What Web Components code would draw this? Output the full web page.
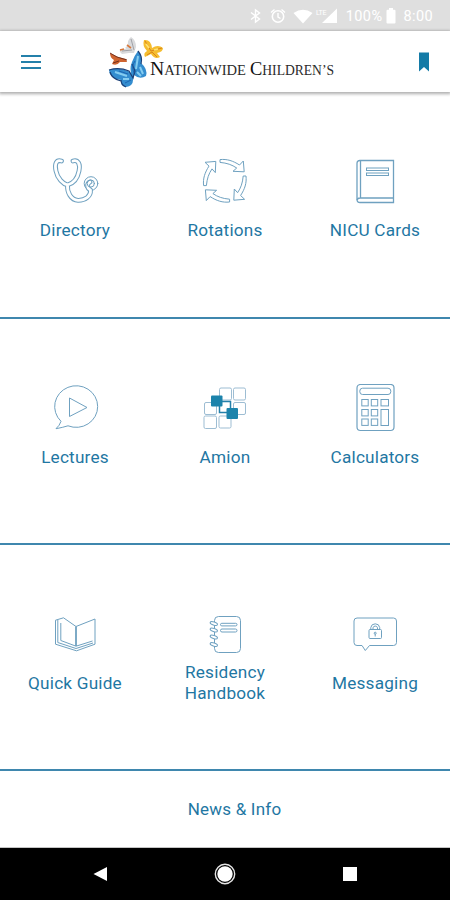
<!DOCTYPE html>
<html lang="en">
<head>
<meta charset="utf-8">
<meta name="viewport" content="width=device-width, initial-scale=1">
<title>Nationwide Children's</title>
<style>
  body {
    margin: 0;
    background: #fff;
    font-family: Roboto, "Liberation Sans", sans-serif;
    color: #1f77a3;
  }
</style>
</head>
<body>
<home-screen></home-screen>

<script>
  // line icons, all on a 48 x 48 grid
  const ARROW = '<path d="M19 2.600C26 1.800 32 3.800 38.500 8L42.300 4L43.200 14.800L32 14.300L35.700 11C31 7.800 26 6 19 5.400Z"/>';
  const TUBE = 'M10.500 4C5 2.500 3.500 7 5 14C6.500 21.500 12 27 16.500 28C22 26.500 26.500 21.500 28 14C29.500 7 27 2.500 22 4M16.500 28C16 35.500 20 43 27 43.300C34 43.500 40 39.500 39.500 33C36 31.500 35.500 26.500 39 25';

  const ICONS = {
    directory: `
      <g stroke-linecap="round" stroke-linejoin="round">
        <circle cx="40" cy="26.500" r="6.800"/>
        <path d="${TUBE}" stroke-width="4.800"/>
        <path d="${TUBE}" stroke="#fff" stroke-width="2.800"/>
        <circle cx="39.800" cy="26.500" r="3.600"/>
      </g>`,
    rotations: [0, 90, 180, 270].map(a => `<g transform="rotate(${a} 23.800 23.800)">${ARROW}</g>`).join(''),
    cards: `
      <path d="M9 3.500H42.500V45.500H9Q6 45.500 6 42.500V6.500Q6 3.500 9 3.500Z" stroke-width="1.300"/>
      <path d="M9.500 3.500V41M6 43Q6.500 41 9 41H42.500" stroke-width="1.300"/>
      <rect x="15.500" y="11" width="22" height="2.500"/>
      <rect x="15.500" y="16" width="22" height="2.500"/>`,
    lectures: `
      <path d="M10 37.300A21.500 20.800 0 1 1 17 41.800Q11.500 43.500 5 44.700Q8.700 41.500 10 37.300Z"/>
      <path d="M18.500 14L36 23.500L18.500 32.500Z"/>`,
    amion: `
      <g stroke="#9dbdd3">
        <rect x="18.500" y="4" width="12" height="12" rx="1.500"/>
        <rect x="32.500" y="4" width="12" height="12" rx="1.500"/>
        <rect x="3.500" y="18.500" width="12" height="12" rx="1.500"/>
        <rect x="32.500" y="18.500" width="12" height="12" rx="1.500"/>
        <rect x="3" y="32" width="12.500" height="12.500" rx="1.500"/>
        <rect x="18" y="32" width="12" height="12" rx="1.500"/>
      </g>
      <rect x="18.500" y="17.500" width="11" height="11" stroke="#2480aa" stroke-width="1.500"/>
      <rect x="10" y="11.500" width="11.500" height="11" rx="1" fill="#1c83ab" stroke="none"/>
      <rect x="25.500" y="24" width="11.500" height="11" rx="1" fill="#1c83ab" stroke="none"/>`,
    calculators: `
      <rect x="6" y="0.500" width="37" height="46" rx="3.500" stroke-width="1.200"/>
      <rect x="8.800" y="4.200" width="31" height="6.300" rx="2.800"/>
      ${[15.5, 25.5, 35].map(y => `
        <rect x="10.800" y="${y}" width="6.400" height="6.400"/>
        <rect x="20.300" y="${y}" width="6.400" height="6.400"/>`).join('')}
      <rect x="30" y="15.500" width="7.500" height="6.400"/>
      <rect x="30" y="25.500" width="7.500" height="16"/>`,
    guide: `
      <path d="M25 16.500L12.500 7.800L4.500 10.200V34.200L25.500 40.800L44 34.200V9L25 16.500"/>
      <path d="M25 16.500V36" stroke-width="1.800"/>
      <path d="M9.800 13V30.500L25 36.200L41.500 31M6.800 10V32.500L25 38.500L42 33"/>`,
    handbook: `
      <rect x="13.500" y="6.500" width="26" height="36" rx="4"/>
      ${[13.5, 20, 27, 34.5].map(y => `
        <ellipse cx="12.800" cy="${y}" rx="3.800" ry="1.600" fill="#fff" transform="rotate(18 12.800 ${y})"/>`).join('')}
      <rect x="19.500" y="13.300" width="16.500" height="2.600" rx="1.300"/>
      <rect x="19.500" y="19" width="16.500" height="3" rx="1.500"/>`,
    messaging: `
      <path d="M6 8H42.500Q45.500 8 45.500 11V32.500Q45.500 35.500 42.500 35.500H18.500L14.300 40.500L11 35.500H6Q3 35.500 3 32.500V11Q3 8 6 8Z"/>
      <rect x="18" y="19.500" width="12.500" height="9" rx="1"/>
      <path d="M19.800 19.500V17.500A4.500 4.300 0 0 1 28.700 17.500V19.500M22 19.500V17.800A2.300 2.200 0 0 1 26.500 17.800V19.500"/>
      <circle cx="24.200" cy="23.200" r="1"/>
      <path d="M24.200 24V26.500"/>`
  };

  class StatusBar extends HTMLElement {
    constructor() {
      super();
      this.attachShadow({ mode: 'open' }).innerHTML = `
        <style>
          :host {
            display: flex;
            justify-content: flex-end;
            align-items: center;
            height: 31px;
            padding-right: 17px;
            padding-top: 1px;
            box-sizing: border-box;
            background: #dfdfdf;
            color: #fff;
            font-size: 14.500px;
            letter-spacing: 0.400px;
            white-space: nowrap;
          }
          svg { display: block; flex: none; }
          .symbols { margin-right: 8px; }
          .battery { margin: 0 7px 0 4px; }
        </style>
        <svg class="symbols" width="88" height="20" viewBox="0 0 88 20" fill="none" stroke="#fff" stroke-width="1.400">
          <path d="M1 6.500L9.500 13L5.500 16V4L9.500 7L1 13.500"/>
          <circle cx="28" cy="10.500" r="5.700" stroke-width="1.600"/>
          <path d="M28 7V11L30.500 12.500M21 6.500L24.500 3.500M35 6.500L31.500 3.500"/>
          <path d="M43.500 7Q53 0.500 62.500 7L53 17.500Z" fill="#fff" stroke="none"/>
          <path d="M72 17H87V2.500Z" fill="#fff" stroke="none"/>
          <text x="66" y="8.500" font-size="7" letter-spacing="-0.300" fill="#fff" stroke="none">LTE</text>
        </svg>
        <span>100%</span>
        <svg class="battery" width="10" height="16" viewBox="0 0 10 16" fill="#fff">
          <path d="M3 0H7V1.800H8.500Q9.500 1.800 9.500 3V14.500Q9.500 15.500 8.500 15.500H1.500Q0.500 15.500 0.500 14.500V3Q0.500 1.800 1.500 1.800H3Z"/>
        </svg>
        <span>8:00</span>
      `;
    }
  }
  customElements.define('status-bar', StatusBar);


  class BrandLogo extends HTMLElement {
    constructor() {
      super();
      this.attachShadow({ mode: 'open' }).innerHTML = `
        <style>
          :host { display: block; }
          svg { display: block; }
          text {
            font-family: "Liberation Serif", serif;
            font-size: 14px;
            fill: #2b2b2b;
          }
          .cap { font-size: 19px; fill: #111; }
        </style>
        <svg width="228" height="54" viewBox="107 35 228 54">
          <!-- white butterfly -->
          <path d="M131 37Q136 40 136 47L134 53L129 53L122 54Q118 51 121 49L126 49Q124 47 128 46Q127 40 131 37Z" fill="#d9dadc"/>
          <path d="M131 39L134 50M122 51L132 50" stroke="#9a9ba0" stroke-width="0.900" fill="none"/>
          <path d="M127 45L131 48M120 50L124 49" stroke="#d7783b" stroke-width="1.600"/>
          <!-- yellow butterfly -->
          <path d="M144 40Q151 39 152 48Q158 44 163 48Q163 52 157 53L160 57Q155 60 151 54L145 57Q143 53 147 51Q142 46 144 40Z" fill="#f5bd2f"/>
          <path d="M145 41L151 51L162 48M147 55L152 52L157 57" stroke="#da8419" stroke-width="1" fill="none"/>
          <path d="M146 44L149 48M154 50L158 49" stroke="#ffe375" stroke-width="1.700"/>
          <!-- orange butterfly -->
          <path d="M110 53L118 57L126 59L127 62L120 62Q117 66 112 64L114 60Q110 58 110 53Z" fill="#cf6430"/>
          <path d="M110 53L117 57L127 60M113 63L119 61" stroke="#6a2a1a" stroke-width="0.900" fill="none"/>
          <!-- blue butterfly -->
          <path d="M138 51Q142 56 141 63Q148 69 146 76Q140 80 134 75L133 80Q133 86 126 87Q120 86 121 80Q109 78 109 70Q118 67 128 71Q132 73 132 76Q129 69 132 62Q134 56 138 51Z" fill="#348dcf"/>
          <path d="M138 51Q143 57 141 64M109 70Q119 67 129 71L133 78L135 71L132 64M110 72Q112 79 121 81M126 87Q121 85 121 80" fill="none" stroke="#1c4077" stroke-width="1.200"/>
          <path d="M138 56L136 69M140 67L143 74M115 72L127 76M123 79L129 79M137 72L141 76" fill="none" stroke="#85cdf1" stroke-width="2"/>
          <path d="M134 73Q131 66 135 61M119 71L128 74M125 83L131 80" fill="none" stroke="#1d66b2" stroke-width="1"/>
          <text x="150" y="75" textLength="96" lengthAdjust="spacingAndGlyphs"><tspan class="cap">N</tspan>ATIONWIDE</text>
          <text x="250" y="75" textLength="84" lengthAdjust="spacingAndGlyphs"><tspan class="cap">C</tspan>HILDREN’S</text>
        </svg>
      `;
    }
  }
  customElements.define('brand-logo', BrandLogo);


  class AppHeader extends HTMLElement {
    constructor() {
      super();
      this.attachShadow({ mode: 'open' }).innerHTML = `
        <style>
          :host {
            display: grid;
            grid-template-columns: 107px 228px 1fr;
            align-items: center;
            height: 61px;
            background: #fff;
            box-shadow: 0 1px 3px 1px rgba(0, 0, 0, 0.32);
            position: relative;
          }
          svg { display: block; }
          .menu { margin-left: 21px; }
          .bookmark { justify-self: end; margin-right: 21px; }
        </style>
        <svg class="menu" width="20" height="16" viewBox="0 0 20 16">
          <path d="M0 2H20M0 8H20M0 14H20" stroke="#2480aa" stroke-width="2"/>
        </svg>
        <slot></slot>
        <svg class="bookmark" width="10" height="20" viewBox="0 0 10 20">
          <path d="M0 0.500H10V19.500L5 15L0 19.500Z" fill="#147ba7"/>
        </svg>
      `;
    }
  }
  customElements.define('app-header', AppHeader);


  class MenuTile extends HTMLElement {
    constructor() {
      super();
      this.attachShadow({ mode: 'open' }).innerHTML = `
        <style>
          :host {
            display: flex;
            flex-direction: column;
            align-items: center;
            gap: 4px;
            padding-top: 1px;
          }
          svg {
            display: block;
            width: 48px;
            height: 48px;
            fill: none;
            stroke: #6fa1c0;
            stroke-width: 1;
          }
          .label {
            display: flex;
            align-items: center;
            height: 42px;
            max-width: 110px;
            font-size: 17.200px;
            line-height: 21px;
            letter-spacing: 0.200px;
            text-align: center;
          }
        </style>
        <svg viewBox="0 0 48 48"></svg>
        <div class="label"><span><slot></slot></span></div>
      `;
    }

    connectedCallback() {
      this.shadowRoot.querySelector('svg').innerHTML = ICONS[this.getAttribute('icon')] || '';
    }
  }
  customElements.define('menu-tile', MenuTile);


  class TileRow extends HTMLElement {
    constructor() {
      super();
      this.attachShadow({ mode: 'open' }).innerHTML = `
        <style>
          :host {
            display: grid;
            grid-template-columns: repeat(3, 1fr);
            align-items: start;
            box-sizing: border-box;
            height: 226px;
            padding-top: 64px;
            border-bottom: 2px solid #3f87ae;
          }
        </style>
        <slot></slot>
      `;
    }
  }
  customElements.define('tile-row', TileRow);


  class NewsLink extends HTMLElement {
    constructor() {
      super();
      this.attachShadow({ mode: 'open' }).innerHTML = `
        <style>
          :host {
            display: flex;
            justify-content: center;
            align-items: center;
            box-sizing: border-box;
            height: 77px;
            padding-left: 19px;
            border-bottom: 1px solid #c4c4c4;
            font-size: 17px;
            letter-spacing: 0.220px;
          }
        </style>
        <slot></slot>
      `;
    }
  }
  customElements.define('news-link', NewsLink);


  class NavBar extends HTMLElement {
    constructor() {
      super();
      this.attachShadow({ mode: 'open' }).innerHTML = `
        <style>
          :host {
            display: grid;
            grid-template-columns: repeat(3, 125px);
            justify-content: center;
            justify-items: center;
            align-items: center;
            height: 52px;
            background: #000;
          }
          svg { display: block; }
        </style>
        <svg width="24" height="24" viewBox="0 0 24 24"><path d="M5.500 12L19 5V19Z" fill="#fff"/></svg>
        <svg width="24" height="24" viewBox="0 0 24 24">
          <circle cx="12" cy="12" r="9.700" fill="none" stroke="#e4e4e4" stroke-width="1.400"/>
          <circle cx="12" cy="12" r="7.700" fill="#fff"/>
        </svg>
        <svg width="24" height="24" viewBox="0 0 24 24"><rect x="5" y="5" width="14" height="14" fill="#fff"/></svg>
      `;
    }
  }
  customElements.define('nav-bar', NavBar);


  class HomeScreen extends HTMLElement {
    constructor() {
      super();
      this.attachShadow({ mode: 'open' }).innerHTML = `
        <style>
          :host {
            display: flex;
            flex-direction: column;
            height: 900px;
            overflow: hidden;
          }
          tile-row:first-of-type { height: 227px; }
        </style>
        <status-bar></status-bar>
        <app-header><brand-logo></brand-logo></app-header>
        <tile-row>
          <menu-tile icon="directory">Directory</menu-tile>
          <menu-tile icon="rotations">Rotations</menu-tile>
          <menu-tile icon="cards">NICU Cards</menu-tile>
        </tile-row>
        <tile-row>
          <menu-tile icon="lectures">Lectures</menu-tile>
          <menu-tile icon="amion">Amion</menu-tile>
          <menu-tile icon="calculators">Calculators</menu-tile>
        </tile-row>
        <tile-row>
          <menu-tile icon="guide">Quick Guide</menu-tile>
          <menu-tile icon="handbook">Residency Handbook</menu-tile>
          <menu-tile icon="messaging">Messaging</menu-tile>
        </tile-row>
        <news-link>News &amp; Info</news-link>
        <nav-bar></nav-bar>
      `;
    }
  }
  customElements.define('home-screen', HomeScreen);
</script>
</body>
</html>
